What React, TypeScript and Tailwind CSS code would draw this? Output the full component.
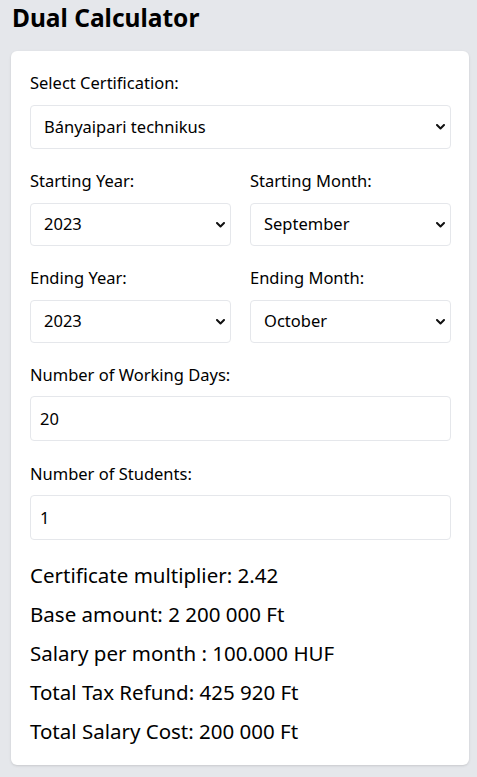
import React, { useState } from 'react';

const months = [
  'January', 'February', 'March', 'April', 'May', 'June',
  'July', 'August', 'September', 'October', 'November', 'December',
];
const years = ['2022', '2023', '2024', '2025'];

function Chevron() {
  return (
    <svg
      className="pointer-events-none absolute right-[6px] top-1/2 -translate-y-1/2"
      width="9"
      height="6"
      viewBox="0 0 9 6"
      fill="none"
    >
      <path d="M1 1l3.5 3.5L8 1" stroke="#111" strokeWidth="2" strokeLinecap="round" strokeLinejoin="round" />
    </svg>
  );
}

function Select({ value, options, onChange, tall }: { value: string; options: string[]; onChange: (v: string) => void; tall?: boolean }) {
  return (
    <div className="relative">
      <select
        value={value}
        onChange={(e) => onChange(e.target.value)}
        className={
          tall
            ? 'h-[44px] w-full appearance-none rounded border border-[#e5e7eb] bg-white pl-[13px] pr-6 text-[16.5px] text-black outline-none'
            : 'h-[43px] w-full appearance-none rounded border border-[#e5e7eb] bg-white pl-[13px] pr-6 text-[16.5px] text-black outline-none'
        }
      >
        {options.map((o) => (
          <option key={o} value={o}>{o}</option>
        ))}
      </select>
      <Chevron />
    </div>
  );
}

export default function App() {
  const [cert, setCert] = useState('Bányaipari technikus');
  const [startYear, setStartYear] = useState('2023');
  const [startMonth, setStartMonth] = useState('September');
  const [endYear, setEndYear] = useState('2023');
  const [endMonth, setEndMonth] = useState('October');
  const [days, setDays] = useState('20');
  const [students, setStudents] = useState('1');

  return (
    <div className="min-h-[777px] bg-[#e5e7eb] pb-3 font-['Noto_Sans',sans-serif] text-black">
      <h1 className="px-3 text-[24.5px] font-bold leading-[36px]">Dual Calculator</h1>
      <div className="ml-[11px] mr-[8px] mt-[15px] rounded-md bg-white pb-[14px] pl-[19px] pr-[18px] pt-[20px] shadow">
        <label className="block text-[16.5px] leading-[24px]">Select Certification:</label>
        <div className="mt-[10px]">
          <Select tall value={cert} options={['Bányaipari technikus', 'Gépész technikus', 'Informatikus']} onChange={setCert} />
        </div>

        <div className="mt-[20px] grid grid-cols-2 gap-x-[19px]">
          <div>
            <label className="block text-[16.5px] leading-[24px]">Starting Year:</label>
            <div className="mt-[10px]">
              <Select value={startYear} options={years} onChange={setStartYear} />
            </div>
          </div>
          <div>
            <label className="block text-[16.5px] leading-[24px]">Starting Month:</label>
            <div className="mt-[10px]">
              <Select value={startMonth} options={months} onChange={setStartMonth} />
            </div>
          </div>
        </div>

        <div className="mt-[20px] grid grid-cols-2 gap-x-[19px]">
          <div>
            <label className="block text-[16.5px] leading-[24px]">Ending Year:</label>
            <div className="mt-[10px]">
              <Select value={endYear} options={years} onChange={setEndYear} />
            </div>
          </div>
          <div>
            <label className="block text-[16.5px] leading-[24px]">Ending Month:</label>
            <div className="mt-[10px]">
              <Select value={endMonth} options={months} onChange={setEndMonth} />
            </div>
          </div>
        </div>

        <label className="mt-[20px] block text-[16.5px] leading-[24px]">Number of Working Days:</label>
        <input
          type="number"
          value={days}
          onChange={(e) => setDays(e.target.value)}
          className="mt-[9px] block h-[45px] w-full rounded border border-[#e5e7eb] px-[9px] text-[16.5px] outline-none"
        />

        <label className="mt-[21px] block text-[16.5px] leading-[24px]">Number of Students:</label>
        <input
          type="number"
          value={students}
          onChange={(e) => setStudents(e.target.value)}
          className="mt-[9px] block h-[45px] w-full rounded border border-[#e5e7eb] px-[9px] text-[16.5px] outline-none"
        />

        <div className="mt-[16px] text-[20.5px]">
          <p className="leading-[39px]">Certificate multiplier: 2.42</p>
          <p className="leading-[39px]">Base amount: 2 200 000 Ft</p>
          <p className="leading-[39px]">Salary per month : 100.000 HUF</p>
          <p className="leading-[39px]">Total Tax Refund: 425 920 Ft</p>
          <p className="leading-[39px]">Total Salary Cost: 200 000 Ft</p>
        </div>
      </div>
    </div>
  );
}
